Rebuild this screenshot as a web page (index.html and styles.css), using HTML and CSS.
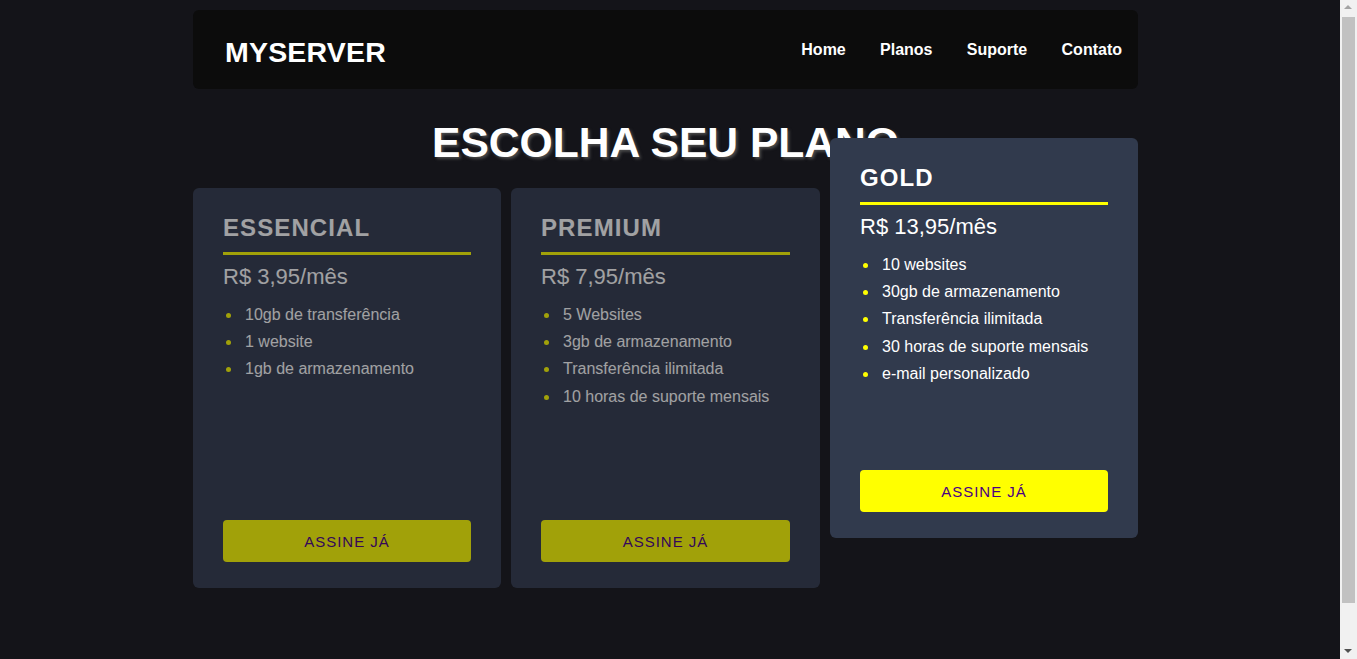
FILE: index.html
```html
<!DOCTYPE html>
<html lang="pt-BR">
<head>
<meta charset="utf-8">
<title>MyServer - Planos</title>
<link rel="stylesheet" href="styles.css">
</head>
<body>
<div class="page">
  <header class="topbar">
    <div class="logo">MYSERVER</div>
    <nav class="menu">
      <a href="#">Home</a>
      <a href="#">Planos</a>
      <a href="#">Suporte</a>
      <a href="#">Contato</a>
    </nav>
  </header>
  <h1 class="headline">ESCOLHA SEU PLANO</h1>
  <section class="plans">
    <article class="plan plan-dim">
      <h2 class="plan-name">ESSENCIAL</h2>
      <p class="plan-price">R$ 3,95/mês</p>
      <ul class="plan-list">
        <li>10gb de transferência</li>
        <li>1 website</li>
        <li>1gb de armazenamento</li>
      </ul>
      <button class="plan-btn">ASSINE JÁ</button>
    </article>
    <article class="plan plan-dim">
      <h2 class="plan-name">PREMIUM</h2>
      <p class="plan-price">R$ 7,95/mês</p>
      <ul class="plan-list">
        <li>5 Websites</li>
        <li>3gb de armazenamento</li>
        <li>Transferência ilimitada</li>
        <li>10 horas de suporte mensais</li>
      </ul>
      <button class="plan-btn">ASSINE JÁ</button>
    </article>
    <article class="plan plan-featured">
      <h2 class="plan-name">GOLD</h2>
      <p class="plan-price">R$ 13,95/mês</p>
      <ul class="plan-list">
        <li>10 websites</li>
        <li>30gb de armazenamento</li>
        <li>Transferência ilimitada</li>
        <li>30 horas de suporte mensais</li>
        <li>e-mail personalizado</li>
      </ul>
      <button class="plan-btn">ASSINE JÁ</button>
    </article>
  </section>
</div>
<div class="scrollbar" aria-hidden="true">
  <div class="sb-arrow sb-up"></div>
  <div class="sb-track"><div class="sb-thumb"></div></div>
  <div class="sb-arrow sb-down"></div>
</div>
</body>
</html>
```

FILE: styles.css
```css
html, body {
  margin: 0;
  padding: 0;
}
body {
  background: #141419;
  font-family: "Liberation Sans", Arial, sans-serif;
  color: #ffffff;
}
.page {
  width: 945px;
  margin-left: 193px;
  padding-top: 10px;
  padding-bottom: 115px;
}
.topbar {
  height: 79px;
  background: #0c0c0c;
  border-radius: 6px;
  display: flex;
  align-items: center;
  justify-content: space-between;
  padding: 0 16px 0 32px;
  box-sizing: border-box;
}
.logo {
  font-size: 28.5px;
  font-weight: bold;
  letter-spacing: 0.2px;
  color: #fff;
  padding-top: 5px;
}
.menu {
  display: flex;
  gap: 34.3px;
  padding-bottom: 1px;
  padding-top: 1px;
}
.menu a {
  color: #fff;
  text-decoration: none;
  font-weight: bold;
  font-size: 16px;
}
.headline {
  margin: 30px 0 22px;
  text-align: center;
  font-size: 42.6px;
  font-weight: bold;
  line-height: 47px;
  color: #fff;
  text-shadow: 2px 2px 3px #4a4a4a;
}
.plans {
  display: grid;
  grid-template-columns: 308px 309px 308px;
  gap: 10px;
  align-items: start;
}
.plan {
  height: 400px;
  box-sizing: border-box;
  background: #313a4d;
  border-radius: 6px;
  padding: 26px 30px 26px;
  display: flex;
  flex-direction: column;
}
.plan-dim {
  opacity: 0.6;
}
.plan-featured {
  transform: translateY(-50px);
}
.plan-name {
  margin: 0;
  font-size: 24px;
  font-weight: bold;
  line-height: 28px;
  letter-spacing: 1.1px;
  padding-bottom: 10px;
  border-bottom: 3px solid #ffff00;
}
.plan-price {
  margin: 9px 0 0;
  font-size: 22px;
  line-height: 25px;
}
.plan-list {
  margin: 12px 0 0;
  padding: 0 0 0 22px;
  list-style: none;
}
.plan-list li {
  position: relative;
  font-size: 16px;
  line-height: 27.2px;
}
.plan-list li::before {
  content: "";
  position: absolute;
  left: -19px;
  top: 12px;
  width: 5px;
  height: 5px;
  border-radius: 50%;
  background: #ffff00;
}
.plan-btn {
  margin-top: auto;
  height: 42px;
  width: 100%;
  border: none;
  border-radius: 4px;
  background: #ffff00;
  color: #4b0082;
  font-family: "Liberation Sans", Arial, sans-serif;
  font-size: 15px;
  letter-spacing: 1px;
  cursor: pointer;
}

/* classic browser scrollbar drawn over the right edge */
.scrollbar {
  position: fixed;
  top: 0;
  right: 0;
  width: 17px;
  height: 100vh;
  background: #f1f1f1;
  display: flex;
  flex-direction: column;
}
.sb-arrow {
  height: 17px;
  flex: none;
  position: relative;
}
.sb-up::after,
.sb-down::after {
  content: "";
  position: absolute;
  left: 4px;
  border-left: 4px solid transparent;
  border-right: 4px solid transparent;
}
.sb-up::after {
  top: 5px;
  border-bottom: 4px solid #a3a3a3;
}
.sb-down::after {
  top: 7px;
  border-top: 4px solid #505050;
}
.sb-track {
  flex: 1;
  padding: 0 2px;
}
.sb-thumb {
  height: 586px;
  background: #c1c1c1;
}
```
